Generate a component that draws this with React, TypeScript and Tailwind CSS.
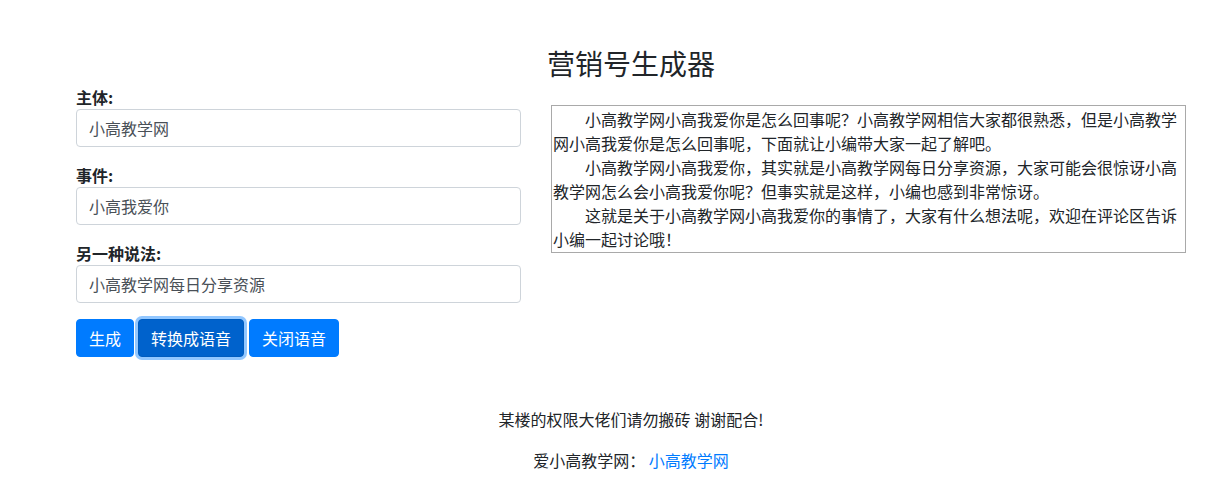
const font = "font-['Noto_Sans_CJK_SC',sans-serif]"

const fields = [
  { label: '主体:', value: '小高教学网' },
  { label: '事件:', value: '小高我爱你' },
  { label: '另一种说法:', value: '小高教学网每日分享资源' },
]

const paragraphs = [
  '小高教学网小高我爱你是怎么回事呢？小高教学网相信大家都很熟悉，但是小高教学网小高我爱你是怎么回事呢，下面就让小编带大家一起了解吧。',
  '小高教学网小高我爱你，其实就是小高教学网每日分享资源，大家可能会很惊讶小高教学网怎么会小高我爱你呢？但事实就是这样，小编也感到非常惊讶。',
  '这就是关于小高教学网小高我爱你的事情了，大家有什么想法呢，欢迎在评论区告诉小编一起讨论哦！',
]

const btn =
  'h-[38px] rounded-[4px] border border-[#007bff] bg-[#007bff] px-3 text-[16px] leading-[24px] text-white'

export default function App() {
  return (
    <div className={`min-h-[504px] bg-white text-[#212529] ${font}`}>
      <div className="ml-[76px] w-[1110px] pt-[46px]">
        <h3 className="mb-[5px] h-[34px] text-center text-[28px] leading-[34px]">营销号生成器</h3>

        <div className="flex gap-[30px]">
          <div className="w-[445px]">
            {fields.map((f) => (
              <div key={f.label} className="mb-4">
                <label className="block text-[16px] font-bold leading-[24px]">{f.label}</label>
                <input
                  type="text"
                  defaultValue={f.value}
                  className={`h-[38px] w-full rounded-[4px] border border-[#ced4da] px-3 text-[16px] text-[#495057] outline-none ${font}`}
                />
              </div>
            ))}
            <div className="flex gap-[4px]">
              <button type="button" className={btn}>
                生成
              </button>
              <button
                type="button"
                className="h-[38px] rounded-[4px] border border-[#005cbf] bg-[#0062cc] px-3 text-[16px] leading-[24px] text-white shadow-[0_0_0_3px_rgba(38,143,255,0.5)]"
              >
                转换成语音
              </button>
              <button type="button" className={`${btn} ml-[1px]`}>
                关闭语音
              </button>
            </div>
          </div>

          <div className="mt-[20px] h-[148px] w-[635px] border border-[#a9a9a9] p-[1px] text-[16px] leading-[24px]">
            {paragraphs.map((p, i) => (
              <p key={i} className="indent-[32px]">
                {p}
              </p>
            ))}
          </div>
        </div>

        <div className="mt-[50px] text-center text-[16px] leading-[24px]">
          <p className="mb-[17px]">某楼的权限大佬们请勿搬砖 谢谢配合!</p>
          <p>
            爱小高教学网： <a className="text-[#007bff]">小高教学网</a>
          </p>
        </div>
      </div>
    </div>
  )
}
